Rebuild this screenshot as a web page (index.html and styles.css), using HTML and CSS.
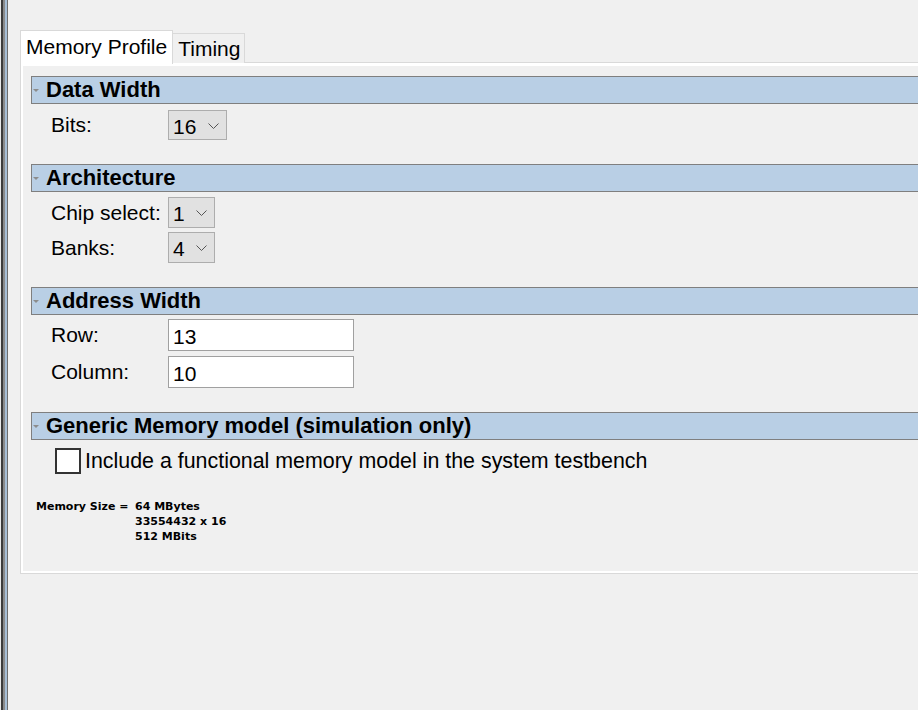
FILE: index.html
```html
<!DOCTYPE html>
<html>
<head>
<meta charset="utf-8">
<link rel="stylesheet" href="styles.css">
</head>
<body>
<div class="window">
  <div class="edge"></div>
  <div class="main">
    <div class="tabs">
      <div class="tab active">Memory Profile</div>
      <div class="tab">Timing</div>
    </div>
    <div class="panel">
      <div class="page">
        <section class="group g-data">
          <div class="ghead"><span class="tri"></span>Data Width</div>
          <div class="row r-bits">
            <span class="label">Bits:</span>
            <div class="combo combo-wide"><span class="val">16</span><svg class="chev" width="11" height="6" viewBox="0 0 11 6"><path d="M0.5 0.5 L5.5 5.5 L10.5 0.5" fill="none" stroke="#555" stroke-width="1"/></svg></div>
          </div>
        </section>
        <section class="group g-arch">
          <div class="ghead"><span class="tri"></span>Architecture</div>
          <div class="row r-chip">
            <span class="label">Chip select:</span>
            <div class="combo"><span class="val">1</span><svg class="chev" width="11" height="6" viewBox="0 0 11 6"><path d="M0.5 0.5 L5.5 5.5 L10.5 0.5" fill="none" stroke="#555" stroke-width="1"/></svg></div>
          </div>
          <div class="row r-banks">
            <span class="label">Banks:</span>
            <div class="combo"><span class="val">4</span><svg class="chev" width="11" height="6" viewBox="0 0 11 6"><path d="M0.5 0.5 L5.5 5.5 L10.5 0.5" fill="none" stroke="#555" stroke-width="1"/></svg></div>
          </div>
        </section>
        <section class="group g-addr">
          <div class="ghead"><span class="tri"></span>Address Width</div>
          <div class="row r-row">
            <span class="label">Row:</span>
            <div class="field">13</div>
          </div>
          <div class="row r-col">
            <span class="label">Column:</span>
            <div class="field">10</div>
          </div>
        </section>
        <section class="group g-gen">
          <div class="ghead"><span class="tri"></span>Generic Memory model (simulation only)</div>
          <div class="check-row">
            <span class="checkbox"></span>
            <span class="check-label">Include a functional memory model in the system testbench</span>
          </div>
        </section>
        <div class="size">
          <div class="size-label">Memory Size =</div>
          <div class="size-vals">
            <div>64 MBytes</div>
            <div>33554432 x 16</div>
            <div>512 MBits</div>
          </div>
        </div>
      </div>
    </div>
  </div>
</div>
</body>
</html>
```

FILE: styles.css
```css
html, body {
  margin: 0;
  padding: 0;
  background: #f0f0f0;
  overflow: hidden;
}
body {
  width: 918px;
  height: 710px;
  font-family: "Liberation Sans", Arial, sans-serif;
  font-size: 21px;
  color: #000;
}
.window {
  display: flex;
  height: 710px;
}
.edge {
  width: 8px;
  flex: 0 0 8px;
  background: linear-gradient(to right,
    #e8e8e8 0, #e8e8e8 1px,
    #3c3c3c 1px, #3c3c3c 3px,
    #8a8a8a 3px, #8a8a8a 5px,
    #a6bed6 5px, #a6bed6 7px,
    #6e6e6e 7px, #6e6e6e 8px);
}
.main {
  flex: 1;
  padding-left: 12px;
  padding-top: 30px;
  min-width: 0;
}
.tabs {
  display: flex;
  align-items: flex-end;
  height: 33px;
}
.tab {
  box-sizing: border-box;
  height: 30px;
  border: 1px solid #d9d9d9;
  border-bottom: none;
  border-left: none;
  padding: 0 4px 0 5px;
  line-height: 29px;
  background: #f0f0f0;
}
.tab.active {
  height: 34px;
  border-left: 1px solid #d9d9d9;
  background: #fff;
  line-height: 32px;
  position: relative;
  z-index: 1;
  margin-bottom: -1px;
  padding-right: 5px;
}
.panel {
  border: 1px solid #d9d9d9;
  border-right: none;
  margin-top: -1px;
  height: 512px;
  box-sizing: border-box;
}
.page {
  border: 2px solid #fff;
  border-top-width: 3px;
  border-right: none;
  height: 100%;
  box-sizing: border-box;
  background: #f0f0f0;
  padding-left: 8px;
  padding-top: 10px;
}
.ghead {
  height: 26px;
  border: 1px solid #7f7f7f;
  border-right: none;
  background: #b9cfe5;
  font-weight: bold;
  font-size: 22px;
  line-height: 26px;
  display: flex;
  align-items: center;
}
.tri {
  width: 0;
  height: 0;
  border-left: 3px solid transparent;
  border-right: 3px solid transparent;
  border-top: 3px solid #8c8c8c;
  margin: 0 7px 0 1px;
}
.row {
  display: flex;
  align-items: center;
  padding-left: 20px;
}
.label {
  width: 117px;
}
.combo {
  box-sizing: border-box;
  width: 47px;
  height: 31px;
  border: 1px solid #adadad;
  background: #e1e1e1;
  display: flex;
  align-items: center;
  justify-content: space-between;
  padding: 0 7px 0 4px;
}
.combo-wide {
  width: 59px;
  height: 30px;
}
.val {
  line-height: 1;
  margin-top: 2px;
}
.chev {
  display: block;
  margin-top: 1px;
}
.field {
  box-sizing: border-box;
  width: 186px;
  height: 32px;
  border: 1px solid #a0a0a0;
  background: #fff;
  padding-left: 4px;
  line-height: 30px;
  padding-top: 2px;
}
.r-bits { margin-top: 6px; }
.g-arch { margin-top: 24px; }
.r-chip { margin-top: 5px; }
.r-banks { margin-top: 4px; }
.g-addr { margin-top: 24px; }
.r-row { margin-top: 4px; }
.r-col { margin-top: 5px; }
.g-gen { margin-top: 24px; }
.check-row {
  display: flex;
  align-items: center;
  padding-left: 24px;
  margin-top: 8px;
}
.checkbox {
  box-sizing: border-box;
  width: 26px;
  height: 26px;
  border: 2px solid #333;
  background: #fff;
  margin-right: 4px;
}
.check-label {
  font-size: 21.4px;
}
.size {
  display: flex;
  font-family: "DejaVu Sans", sans-serif;
  font-size: 11px;
  font-weight: bold;
  line-height: 15px;
  margin-top: 25px;
  padding-left: 5px;
}
.size-label {
  width: 99px;
}
```
